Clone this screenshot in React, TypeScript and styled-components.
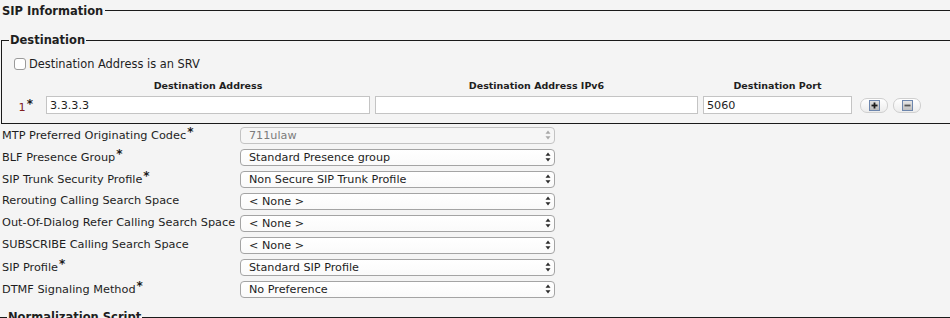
import React from "react";
import styled, { createGlobalStyle } from "styled-components";

const GlobalStyle = createGlobalStyle`
  html, body { margin: 0; padding: 0; }
  body {
    background: #f4f4f4;
    font-family: "DejaVu Sans", Verdana, sans-serif;
    font-size: 11px;
    color: #1e1e1e;
    overflow: hidden;
    width: 950px;
    height: 318px;
  }
`;

const Page = styled.div`
  padding: 4px 0 0 2px;
`;

const SectionTitle = styled.div`
  display: flex;
  align-items: center;
  height: 14px;
  font-weight: bold;
  font-size: 11.5px;
`;

const TitleLine = styled.div`
  flex: 1;
  height: 1px;
  background: #1a1a1a;
  margin: -1px 0 0 2px;
`;

const Frame = styled.fieldset`
  margin: 15px 0 0 -1px;
  padding: 0 0 9px 0;
  border: 1px solid #1a1a1a;
  border-right: none;
  min-width: 0;
`;

const Legend = styled.legend`
  margin-left: 7px;
  padding: 0 1px;
  font-weight: bold;
  font-size: 11.5px;
  line-height: 14px;
`;

const CheckRow = styled.label`
  display: flex;
  align-items: center;
  gap: 3px;
  margin: 8px 0 0 12px;
  height: 17px;
  font-size: 11.4px;
`;

const Check = styled.input`
  appearance: none;
  margin: 0;
  width: 12px;
  height: 12px;
  border: 1px solid #9a9a9a;
  border-radius: 3px;
  background: #fff;
`;

const AddrGrid = styled.div`
  display: grid;
  grid-template-columns: 39px 324px 323px 149px auto;
  column-gap: 5px;
  row-gap: 3px;
  align-items: center;
  margin-top: 7px;
`;

const ColHead = styled.div`
  font-weight: bold;
  font-size: 9.5px;
  text-align: center;
  height: 14px;
  line-height: 14px;
`;

const RowNum = styled.div`
  text-align: right;
  padding-right: 8px;
  color: #802020;
  margin-top: 2px;
  font-size: 11.2px;
`;

const Star = styled.span`
  color: #1a1a1a;
  font-weight: bold;
  vertical-align: 3px;
  font-size: 12px;
  line-height: 10px;
  margin-left: 1px;
`;

const TextInput = styled.input`
  box-sizing: border-box;
  height: 18px;
  margin: 0;
  padding: 0 3px;
  border: 1px solid #c4c4c4;
  background: #fff;
  font-family: "DejaVu Sans", Verdana, sans-serif;
  font-size: 11.2px;
  color: #1e1e1e;
  width: 100%;
`;

const BtnGroup = styled.div`
  display: flex;
  gap: 5px;
  margin-left: 3px;
`;

const PillBtn = styled.button`
  width: 28px;
  height: 15px;
  padding: 0;
  border: 1px solid #cfcfcf;
  border-radius: 7px;
  background: linear-gradient(#ffffff, #ececec);
  display: flex;
  align-items: center;
  justify-content: center;
`;

const Fields = styled.div`
  margin-top: 0;
`;

const FieldRow = styled.div`
  display: grid;
  grid-template-columns: 238px 315px;
  align-items: center;
  height: 22px;
`;

const FieldLabel = styled.div`
  white-space: nowrap;
  font-size: 11.3px;
  line-height: 14px;
`;

const SelectWrap = styled.div`
  display: grid;
  align-items: center;
  width: 315px;
  height: 17px;
  & > * { grid-area: 1 / 1; }
`;

const Select = styled.select<{ $disabled?: boolean }>`
  appearance: none;
  -webkit-appearance: none;
  box-sizing: border-box;
  width: 315px;
  height: 17px;
  margin: 0;
  padding: 0 0 0 8px;
  border: 1px solid ${(p) => (p.$disabled ? "#c3c3c3" : "#a4a4a4")};
  border-radius: 4px;
  background: ${(p) => (p.$disabled ? "#f6f6f6" : "linear-gradient(#ffffff, #fafafa)")};
  font-family: "DejaVu Sans", Verdana, sans-serif;
  font-size: 11.2px;
  line-height: 15px;
  color: ${(p) => (p.$disabled ? "#7c7c7c" : "#1e1e1e")};
  opacity: 1;
`;

const Arrows = styled.svg`
  display: block;
  justify-self: end;
  margin-right: 4px;
  pointer-events: none;
`;

const NextFrame = styled.fieldset`
  margin: 10px 0 0 -2px;
  padding: 0;
  border: none;
  border-top: 1px solid #1a1a1a;
  height: 20px;
  min-width: 0;
`;

const NextLegend = styled.legend`
  margin-left: 7px;
  padding: 0 1px;
  font-weight: bold;
  font-size: 11.5px;
  line-height: 14px;
`;

const PlusIcon = () => (
  <svg width="11" height="11" viewBox="0 0 11 11">
    <defs>
      <linearGradient id="pg" x1="0" y1="0" x2="0" y2="1">
        <stop offset="0" stopColor="#e4e4e4" />
        <stop offset="1" stopColor="#b8b8b8" />
      </linearGradient>
    </defs>
    <rect x="0.5" y="0.5" width="10" height="10" fill="url(#pg)" stroke="#6d86ad" />
    <rect x="2.5" y="4.6" width="6" height="1.8" fill="#1c1c1c" />
    <rect x="4.6" y="2.5" width="1.8" height="6" fill="#1c1c1c" />
  </svg>
);

const MinusIcon = () => (
  <svg width="11" height="11" viewBox="0 0 11 11">
    <defs>
      <linearGradient id="mg" x1="0" y1="0" x2="0" y2="1">
        <stop offset="0" stopColor="#e8e8e8" />
        <stop offset="1" stopColor="#bcbcbc" />
      </linearGradient>
    </defs>
    <rect x="0.5" y="0.5" width="10" height="10" fill="url(#mg)" stroke="#6d86ad" />
    <rect x="2.5" y="4.6" width="6" height="1.8" fill="#555" />
  </svg>
);

const SelectArrows = ({ muted }: { muted?: boolean }) => (
  <Arrows width="6" height="10" viewBox="0 0 6 10">
    <path d="M3 0.5 L5.5 3.8 L0.5 3.8 Z" fill={muted ? "#a8a8a8" : "#2a2a2a"} />
    <path d="M3 9.5 L5.5 6.2 L0.5 6.2 Z" fill={muted ? "#a8a8a8" : "#2a2a2a"} />
  </Arrows>
);

type Field = { label: string; required?: boolean; value: string; disabled?: boolean };

const fields: Field[] = [
  { label: "MTP Preferred Originating Codec", required: true, value: "711ulaw", disabled: true },
  { label: "BLF Presence Group", required: true, value: "Standard Presence group" },
  { label: "SIP Trunk Security Profile", required: true, value: "Non Secure SIP Trunk Profile" },
  { label: "Rerouting Calling Search Space", value: "< None >" },
  { label: "Out-Of-Dialog Refer Calling Search Space", value: "< None >" },
  { label: "SUBSCRIBE Calling Search Space", value: "< None >" },
  { label: "SIP Profile", required: true, value: "Standard SIP Profile" },
  { label: "DTMF Signaling Method", required: true, value: "No Preference" },
];

export default function App() {
  return (
    <>
      <GlobalStyle />
      <Page>
        <SectionTitle>
          SIP Information
          <TitleLine />
        </SectionTitle>
        <Frame>
          <Legend>Destination</Legend>
          <CheckRow>
            <Check type="checkbox" />
            Destination Address is an SRV
          </CheckRow>
          <AddrGrid>
            <div />
            <ColHead>Destination Address</ColHead>
            <ColHead>Destination Address IPv6</ColHead>
            <ColHead>Destination Port</ColHead>
            <div />
            <RowNum>
              1<Star>*</Star>
            </RowNum>
            <TextInput defaultValue="3.3.3.3" />
            <TextInput defaultValue="" />
            <TextInput defaultValue="5060" />
            <BtnGroup>
              <PillBtn aria-label="Add">
                <PlusIcon />
              </PillBtn>
              <PillBtn aria-label="Remove">
                <MinusIcon />
              </PillBtn>
            </BtnGroup>
          </AddrGrid>
        </Frame>
        <Fields>
          {fields.map((f) => (
            <FieldRow key={f.label}>
              <FieldLabel>
                {f.label}
                {f.required && <Star>*</Star>}
              </FieldLabel>
              <SelectWrap>
                <Select $disabled={f.disabled} disabled={f.disabled} defaultValue={f.value}>
                  <option>{f.value}</option>
                </Select>
                <SelectArrows muted={f.disabled} />
              </SelectWrap>
            </FieldRow>
          ))}
        </Fields>
        <NextFrame>
          <NextLegend>Normalization Script</NextLegend>
        </NextFrame>
      </Page>
    </>
  );
}
